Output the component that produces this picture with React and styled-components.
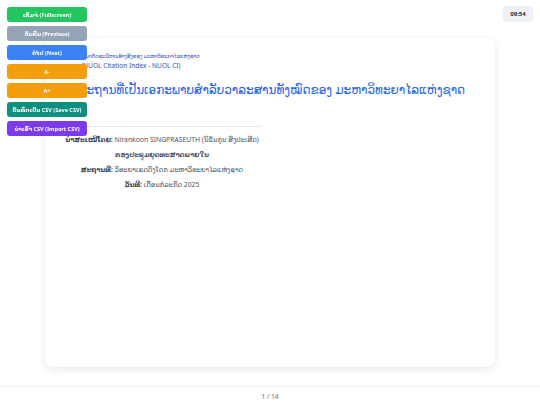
import styled, { createGlobalStyle } from "styled-components";

const GlobalStyle = createGlobalStyle`
  html, body {
    margin: 0;
    padding: 0;
    background: #ffffff;
    font-family: "Noto Sans", "DejaVu Sans", sans-serif;
  }
  * { box-sizing: border-box; }
`;

const Page = styled.div`
  width: 540px;
  height: 405px;
  display: flex;
  flex-direction: column;
  background: #ffffff;
  overflow: hidden;
`;

const Stage = styled.main`
  flex: 1;
  padding: 38px 45px 19px;
  display: flex;
`;

const Slide = styled.section`
  flex: 1;
  background: #ffffff;
  border-radius: 8px;
  box-shadow: 0 2px 8px rgba(15, 23, 42, 0.1);
  padding: 13px 17px;
  display: flex;
  flex-direction: column;
  align-items: flex-start;
  overflow: hidden;
`;

const Kicker = styled.div`
  line-height: 10px;
  color: #3b4fb8;
  white-space: nowrap;
  display: flex;
  flex-direction: column;
  align-items: center;
`;

const KickerLine = styled.span`
  font-size: ${(p) => p.$size}px;
`;

const Title = styled.h1`
  margin: 8px 0 0 -6px;
  font-size: 12px;
  line-height: 22px;
  font-weight: 400;
  color: #2563eb;
  white-space: nowrap;
`;

const Info = styled.div`
  width: 200px;
  margin-top: 25px;
  border-top: 1px solid #e5e7eb;
  padding-top: 7px;
  display: flex;
  flex-direction: column;
  align-items: center;
  gap: 4px;
`;

const InfoLine = styled.p`
  margin: 0;
  font-size: 6.8px;
  line-height: 11px;
  color: #4b5563;
  font-weight: ${(p) => (p.$bold ? 700 : 400)};
  white-space: nowrap;

  b {
    color: #374151;
    font-weight: 700;
  }
`;

const Footer = styled.footer`
  height: 19px;
  border-top: 1px solid #eceff3;
  display: flex;
  align-items: center;
  justify-content: center;
  font-size: 6.5px;
  color: #6b7280;
`;

const Controls = styled.nav`
  position: fixed;
  top: 7px;
  left: 7px;
  width: 80px;
  display: flex;
  flex-direction: column;
  gap: 4px;
  z-index: 5;
`;

const ControlButton = styled.button`
  height: 15px;
  border: none;
  border-radius: 3px;
  background: ${(p) => p.$bg};
  color: #ffffff;
  font-family: inherit;
  font-size: 5.5px;
  font-weight: 700;
  padding: 0;
  display: flex;
  align-items: center;
  justify-content: center;
  white-space: nowrap;
`;

const Clock = styled.div`
  position: fixed;
  top: 6px;
  right: 7px;
  width: 30px;
  height: 16px;
  border-radius: 3px;
  background: #eef1f6;
  color: #1f2937;
  font-size: 6px;
  font-weight: 700;
  display: flex;
  align-items: center;
  justify-content: center;
`;

const buttons = [
  { label: "ເຕັມຈໍ (Fullscreen)", bg: "#22c55e" },
  { label: "ກັບຄືນ (Previous)", bg: "#94a3b8" },
  { label: "ຕໍ່ໄປ (Next)", bg: "#3b82f6" },
  { label: "A-", bg: "#f59e0b" },
  { label: "A+", bg: "#f59e0b" },
  { label: "ບັນທຶກເປັນ CSV (Save CSV)", bg: "#0f8f7e" },
  { label: "ນຳເຂົ້າ CSV (Import CSV)", bg: "#7c3aed" },
];

export default function App() {
  return (
    <Page>
      <GlobalStyle />
      <Controls>
        {buttons.map((b) => (
          <ControlButton key={b.label} $bg={b.bg}>
            {b.label}
          </ControlButton>
        ))}
      </Controls>
      <Clock>09:54</Clock>
      <Stage>
        <Slide>
          <Kicker>
            <KickerLine $size={5.2}>
              ການພັດທະນາດັດຊະນີການອ້າງອີງຂອງ ມະຫາວິທະຍາໄລແຫ່ງຊາດ
            </KickerLine>
            <KickerLine $size={6.6}>(NUOL Citation Index - NUOL CI)</KickerLine>
          </Kicker>
          <Title>
            ມາດຕະຖານທີ່ເປັນເອກະພາບສຳລັບວາລະສານທັງໝົດຂອງ ມະຫາວິທະຍາໄລແຫ່ງຊາດ
          </Title>
          <Info>
            <InfoLine>
              <b>ນຳສະເໜີໂດຍ:</b> Nirankoon SINGPRASEUTH (ນິຣັນກຸນ ສິງປະເສີດ)
            </InfoLine>
            <InfoLine $bold>ກອງປະຊຸມຍຸດທະສາດພາຍໃນ</InfoLine>
            <InfoLine>
              <b>ສະຖານທີ່:</b> ວິທະຍາເຂດດົງໂດກ ມະຫາວິທະຍາໄລແຫ່ງຊາດ
            </InfoLine>
            <InfoLine>
              <b>ວັນທີ:</b> ເດືອນກໍລະກົດ 2025
            </InfoLine>
          </Info>
        </Slide>
      </Stage>
      <Footer>1 / 14</Footer>
    </Page>
  );
}
